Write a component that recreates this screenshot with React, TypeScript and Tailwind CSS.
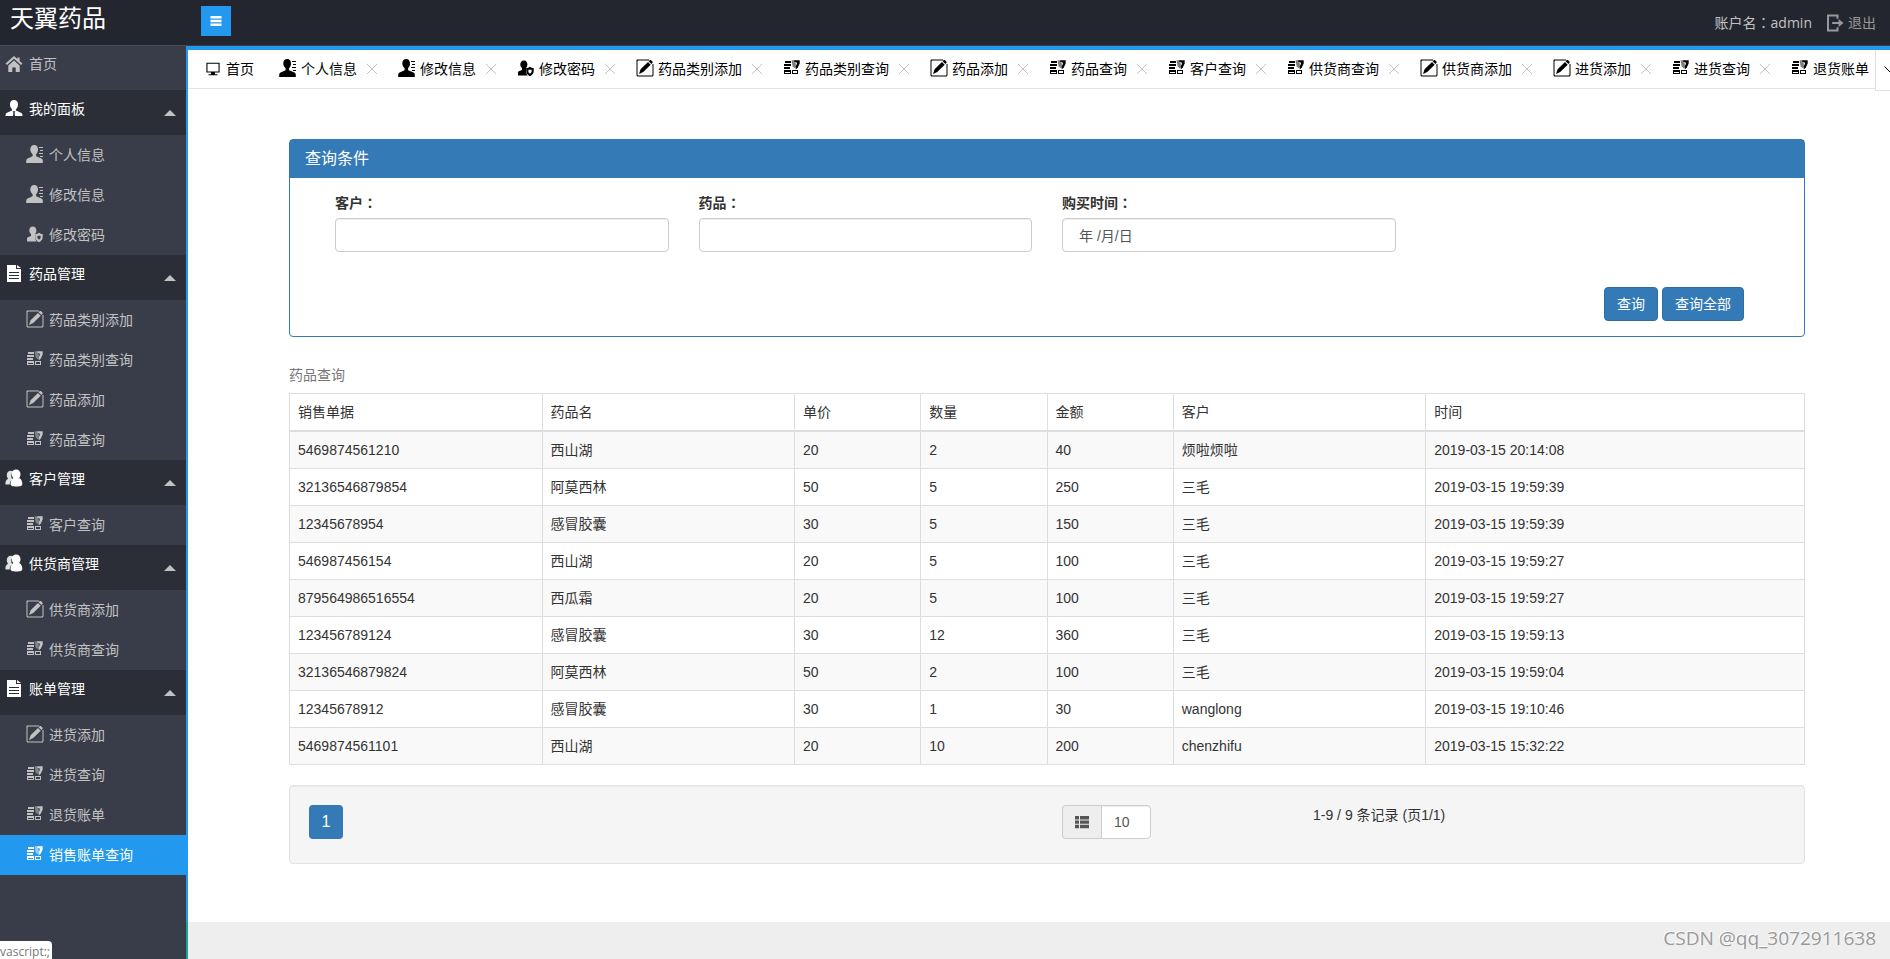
import type { ReactNode } from "react";

type IconName = "home" | "user" | "userList" | "userShield" | "doc" | "edit" | "query" | "users" | "monitor" | "logout";

const shapes: Record<IconName, ReactNode> = {
  home: (
    <>
      <path d="M9 1 0.5 8.6 1.9 10 9 3.8 16.1 10 17.5 8.6 14.6 6V2.6h-2.2V4z" />
      <path d="M9 5.4 3.3 10.4V17h4v-4.6h3.4V17h4v-6.6z" />
    </>
  ),
  user: (
    <path d="M9 1c2.6 0 4 1.8 4 4.4 0 2-.8 3.7-2 4.8v1.2l5 2.3c1 .5 1.5 1.4 1.5 3.3H10l-.4-3.2.8-1.6H7.6l.8 1.6L8 17H.5c0-1.9.5-2.8 1.5-3.3l5-2.3v-1.2C5.8 9.1 5 7.4 5 5.4 5 2.8 6.4 1 9 1z" />
  ),
  userList: (
    <>
      <path d="M8.2 0c2.6 0 3.8 1.8 3.8 4.500 0 2-.8 3.700-1.900 4.800v2l5.400 2.300c1 .5 1.300 1.400 1.300 2.900V18H.2v-1.500c0-1.500.4-2.400 1.400-2.900l5-2.300v-2C5.400 8.200 4.300 6.500 4.300 4.500 4.300 1.800 5.700 0 8.200 0z" />
      <path d="M13 2h4v1h-4zM14 5h3v1h-3zM13 8h4v1h-4zM14 11h3v1h-3z" />
    </>
  ),
  userShield: (
    <>
      <path d="M6.8 1.5c2.4 0 3.6 1.7 3.6 4 0 1.300-.4 2.300-1 3.100l-.3 3.600c.2 1.800.7 3.200 1.700 4.300H1v-2.500c0-1 .5-1.700 1.400-2l2.600-1.100V9C3.900 8.100 3.300 7 3.300 5.500c0-2.300 1.100-4 3.500-4z" />
      <path
        fillRule="evenodd"
        d="M13 7.800c1.100.8 2.200 1.200 3.700 1.200v3c0 2.400-1.300 4.200-3.700 5.200-2.400-1-3.700-2.800-3.700-5.200V9c1.500 0 2.600-.4 3.700-1.200zm-1.600 3v1.400c0 1 .6 1.900 1.600 2.400 1-.5 1.600-1.400 1.600-2.400v-1.400z"
      />
    </>
  ),
  doc: (
    <path fillRule="evenodd" d="M2 1h9v4h5v13H2zM12 1l4 3h-4zM4 8v1h10V8zm0 3v1h10v-1zm0 3v1h10v-1z" />
  ),
  edit: (
    <>
      <path
        fillRule="evenodd"
        d="M1.500.5H13v1H2.200c-.4 0-.7.3-.7.7v13.600c0 .4.3.7.7.7h13.600c.4 0 .7-.3.7-.7V5h1v11c0 .9-.6 1.500-1.500 1.500H2c-.9 0-1.500-.6-1.500-1.500V1.500c0-.6.4-1 1-1z"
      />
      <path d="M13.600 1.200c.5-.4 1.100-.4 1.500 0l1.300 1.300c.4.4.4 1 0 1.500l-1 1-2.800-2.800zM12 2.900l2.700 2.800-7.500 7.200L3 15l1.600-4.700z" />
    </>
  ),
  query: (
    <>
      <path d="M2 2h6v2H2zM1 5h7v2H1zM1 8h6v2H1z" />
      <path fillRule="evenodd" d="M1 11h7v4H1zM2 13v1h5v-1zM9 11h6v4H9zM10 12v2h4v-2z" />
      <path opacity="0.5" d="M8.500 1.200h3.300l1.200 4.300-.6 4.200L9.600 7.400z" />
      <path d="M11.300 1.200h5.400v3.300l-2 4.200-1.800 1.500-.3-2.600 1.400-2.800-.6-1.600-2.100-.4z" />
    </>
  ),
  users: (
    <>
      <path opacity="0.85" d="M5.800 1.800c1 0 1.800.3 2.300.8C6.500 4 6 6 6.400 8c.2 1 .6 1.900 1.200 2.600-1.700.8-2.800 2.200-2.900 4.800H.5c-.3-2.800.4-4.500 2.600-5.600C2.300 8.700 1.800 7.400 1.800 6c0-2.600 1.600-4.200 4-4.200z" />
      <path d="M11 .5c2.700 0 4.500 1.900 4.500 4.500 0 1.600-.5 2.900-1.300 3.900 2.200 1.200 3.200 3.300 3.100 6.100 0 1.600-1.200 2.500-5.800 2.500S5.500 16.600 5.500 15c0-2.800.9-4.900 2.900-6.100C7.300 7.900 6.700 6.600 6.700 5c0-2.600 1.700-4.500 4.300-4.500z" />
    </>
  ),
  monitor: <path fillRule="evenodd" d="M.5 1h17v12.500h-6v2.300h3.300v1.300H3.200v-1.300h3.300v-2.300h-6zM1.900 2.400v9.700h14.200V2.400z" />,
  logout: (
    <path d="M1 .5h11.500v4.300h-2V2.600H3v12.800h7.500v-2.200h2v4.300H1zM12.600 5l4.900 4-4.900 4v-3H6.200V8h6.400z" />
  ),
};

function Icon({ name, className = "mb-0.5 size-[18px]" }: { name: IconName; className?: string }) {
  return (
    <svg viewBox="0 0 18 18" fill="currentColor" aria-hidden="true" className={`shrink-0 ${className}`}>
      {shapes[name]}
    </svg>
  );
}

// the TC face centres the full-width colon in its box
function Colon() {
  return <span className="font-['Noto_Sans_CJK_TC',sans-serif] leading-none">：</span>;
}

type Item = { icon: IconName; label: string };

const menu: { icon: IconName; title: string; items: Item[] }[] = [
  {
    icon: "user",
    title: "我的面板",
    items: [
      { icon: "userList", label: "个人信息" },
      { icon: "userList", label: "修改信息" },
      { icon: "userShield", label: "修改密码" },
    ],
  },
  {
    icon: "doc",
    title: "药品管理",
    items: [
      { icon: "edit", label: "药品类别添加" },
      { icon: "query", label: "药品类别查询" },
      { icon: "edit", label: "药品添加" },
      { icon: "query", label: "药品查询" },
    ],
  },
  { icon: "users", title: "客户管理", items: [{ icon: "query", label: "客户查询" }] },
  {
    icon: "users",
    title: "供货商管理",
    items: [
      { icon: "edit", label: "供货商添加" },
      { icon: "query", label: "供货商查询" },
    ],
  },
  {
    icon: "doc",
    title: "账单管理",
    items: [
      { icon: "edit", label: "进货添加" },
      { icon: "query", label: "进货查询" },
      { icon: "query", label: "退货账单" },
      { icon: "query", label: "销售账单查询" },
    ],
  },
];

const tabs: Item[] = [
  { icon: "userList", label: "个人信息" },
  { icon: "userList", label: "修改信息" },
  { icon: "userShield", label: "修改密码" },
  { icon: "edit", label: "药品类别添加" },
  { icon: "query", label: "药品类别查询" },
  { icon: "edit", label: "药品添加" },
  { icon: "query", label: "药品查询" },
  { icon: "query", label: "客户查询" },
  { icon: "query", label: "供货商查询" },
  { icon: "edit", label: "供货商添加" },
  { icon: "edit", label: "进货添加" },
  { icon: "query", label: "进货查询" },
  { icon: "query", label: "退货账单" },
];

const fields = [
  { id: "customer", label: "客户", value: "" },
  { id: "drug", label: "药品", value: "" },
  { id: "date", label: "购买时间", value: "年 /月/日" },
];

const columns = [
  { title: "销售单据", width: "w-2/12" },
  { title: "药品名", width: "w-2/12" },
  { title: "单价", width: "w-1/12" },
  { title: "数量", width: "w-1/12" },
  { title: "金额", width: "w-1/12" },
  { title: "客户", width: "w-2/12" },
  { title: "时间", width: "w-3/12" },
];

const rows = [
  ["5469874561210", "西山湖", "20", "2", "40", "烦啦烦啦", "2019-03-15 20:14:08"],
  ["32136546879854", "阿莫西林", "50", "5", "250", "三毛", "2019-03-15 19:59:39"],
  ["12345678954", "感冒胶囊", "30", "5", "150", "三毛", "2019-03-15 19:59:39"],
  ["546987456154", "西山湖", "20", "5", "100", "三毛", "2019-03-15 19:59:27"],
  ["879564986516554", "西瓜霜", "20", "5", "100", "三毛", "2019-03-15 19:59:27"],
  ["123456789124", "感冒胶囊", "30", "12", "360", "三毛", "2019-03-15 19:59:13"],
  ["32136546879824", "阿莫西林", "50", "2", "100", "三毛", "2019-03-15 19:59:04"],
  ["12345678912", "感冒胶囊", "30", "1", "30", "wanglong", "2019-03-15 19:10:46"],
  ["5469874561101", "西山湖", "20", "10", "200", "chenzhifu", "2019-03-15 15:32:22"],
];

const buttonClass = "h-[34px] rounded-sm border border-[#2e6da4] bg-[#337ab7] px-3 text-sm text-white";

function Header() {
  return (
    <header className="flex h-[45px] items-start bg-[#23262e]">
      <h1 className="w-[201px] pl-2.5 text-2xl leading-9 text-white">天翼药品</h1>
      <button type="button" aria-label="菜单" className="mt-1.5 flex size-[30px] items-center justify-center bg-[#2299ee] text-white">
        <svg viewBox="0 0 12 10" fill="currentColor" className="h-2.5 w-3">
          <path d="M.5 0h11v2.400H.5zM.5 3.800h11v2.400H.5zM.5 7.600h11V10H.5z" />
        </svg>
      </button>
      <div className="ml-auto flex h-[45px] items-center gap-3.5 pr-3.5 text-sm">
        <span className="text-[#c2c2c2]">
          账户名
          <Colon />
          admin
        </span>
        <a href="#" className="flex items-center gap-1 text-[#999]">
          <Icon name="logout" className="size-[18px]" />
          退出
        </a>
      </div>
    </header>
  );
}

function Sidebar() {
  return (
    <nav className="w-[186px] shrink-0 bg-[#393d49] text-sm text-[#c2c2c2]">
      <a href="#" className="flex h-[45px] items-center gap-1.5 border-t border-[#4a4e5a] pb-2 pl-[5px]">
        <Icon name="home" className="size-[18px]" />
        首页
      </a>
      {menu.map((group) => (
        <div key={group.title}>
          <button type="button" className="flex h-[45px] w-full items-center bg-[#2b2e37] pl-[5px] pr-2.5 text-white">
            <span className="flex items-center gap-1.5 pb-2">
              <Icon name={group.icon} />
              {group.title}
            </span>
            <span className="ml-auto border-x-6 border-b-6 border-x-transparent border-b-[#c2c2c2]" />
          </button>
          <ul>
            {group.items.map((item) => (
              <li key={item.label}>
                <a
                  href="#"
                  className={`flex h-10 items-center gap-[5px] pl-[26px] ${
                    item.label === "销售账单查询" ? "bg-[#2299ee] text-white" : ""
                  }`}
                >
                  <Icon name={item.icon} />
                  {item.label}
                </a>
              </li>
            ))}
          </ul>
        </div>
      ))}
    </nav>
  );
}

function TabBar() {
  return (
    <div className="flex items-start border-t-4 border-[#2299ee] bg-white text-sm text-black">
      <ul className="flex h-[39px] min-w-0 flex-1 overflow-hidden border-b border-[#e2e2e2]">
        <li className="flex shrink-0 items-center pl-[18px] pr-2.5">
          <a href="#" className="flex items-center gap-1.5">
            <Icon name="monitor" className="size-3.5" />
            首页
          </a>
        </li>
        {tabs.map((tab) => (
          <li key={tab.label} className="flex shrink-0 items-center gap-2.5 pl-[15px] pr-1.5">
            <a href="#" className="flex items-center gap-1">
              <Icon name={tab.icon} />
              {tab.label}
            </a>
            <button type="button" aria-label={`关闭${tab.label}`} className="text-[#c2c2c2]">
              <svg viewBox="0 0 10 10" stroke="currentColor" className="size-2.5">
                <path d="M0 0 10 10M10 0 0 10" />
              </svg>
            </button>
          </li>
        ))}
      </ul>
      <button type="button" aria-label="更多" className="flex h-[41px] w-[15px] items-center overflow-hidden border-b border-l border-[#e2e2e2] pl-2">
        <svg viewBox="0 0 14 8" fill="none" stroke="currentColor" className="h-2 w-3.5 shrink-0">
          <path d="M.5.5 7 7 13.500.5" />
        </svg>
      </button>
    </div>
  );
}

function SearchPanel() {
  return (
    <section className="rounded-sm border border-[#337ab7] bg-white">
      <h2 className="bg-[#337ab7] px-[15px] py-[9px] text-base leading-5 text-white">查询条件</h2>
      <form className="px-[30px] py-[15px]">
        <div className="grid grid-cols-4">
          {fields.map((field) => (
            <div key={field.id} className="px-[15px]">
              <label htmlFor={field.id} className="mb-[5px] block font-bold leading-5">
                {field.label}
                <Colon />
              </label>
              <input
                id={field.id}
                type="text"
                defaultValue={field.value}
                className="h-[34px] w-full rounded-sm border border-[#ccc] bg-white px-4 text-sm text-[#555] shadow-[inset_0_1px_1px_rgba(0,0,0,0.075)]"
              />
            </div>
          ))}
        </div>
        <div className="mt-[35px] flex justify-end gap-1 pr-[30px]">
          <button type="button" className={buttonClass}>查询</button>
          <button type="button" className={buttonClass}>查询全部</button>
        </div>
      </form>
    </section>
  );
}

function SalesTable() {
  return (
    <table className="mt-5 w-full table-fixed border-collapse border border-[#ddd] text-left">
      <caption className="py-2 text-left leading-5 text-[#777]">药品查询</caption>
      <thead>
        <tr>
          {columns.map((col) => (
            <th key={col.title} className={`${col.width} border border-b-2 border-[#ddd] p-2 font-normal leading-5`}>
              {col.title}
            </th>
          ))}
        </tr>
      </thead>
      <tbody>
        {rows.map((row) => (
          <tr key={row[0]} className="odd:bg-[#f9f9f9]">
            {row.map((cell, i) => (
              <td key={i} className="border border-[#ddd] p-2 leading-5">{cell}</td>
            ))}
          </tr>
        ))}
      </tbody>
    </table>
  );
}

function Pager() {
  return (
    <div className="mt-5 rounded-sm border border-[#e3e3e3] bg-[#f5f5f5] px-1 pb-6 pt-[19px] shadow-[inset_0_1px_1px_rgba(0,0,0,0.05)]">
      <div className="grid grid-cols-12">
        <div className="col-span-6 px-[15px]">
          <button type="button" className="size-[34px] rounded-sm bg-[#337ab7] text-base text-white">1</button>
        </div>
        <div className="col-span-2 flex px-[15px]">
          <label htmlFor="size" className="flex h-[34px] w-[39px] items-center justify-center rounded-l-sm border border-r-0 border-[#ccc] bg-[#eee] text-[#555]">
            <svg viewBox="0 0 14 14" fill="currentColor" role="img" aria-label="每页条数" className="size-3.5">
              <path d="M0 1h4v3.400H0zM5 1h9v3.400H5zM0 5.400h4v3.400H0zM5 5.400h9v3.400H5zM0 9.800h4v3.400H0zM5 9.800h9v3.400H5z" />
            </svg>
          </label>
          <select
            id="size"
            className="h-[34px] w-[50px] appearance-none rounded-r-sm border border-[#ccc] bg-white pl-3 text-sm text-[#555] shadow-[inset_0_1px_1px_rgba(0,0,0,0.075)]"
          >
            <option>10</option>
          </select>
        </div>
        <p className="col-span-4 px-[15px] leading-5">1-9 / 9 条记录 (页1/1)</p>
      </div>
    </div>
  );
}

export default function App() {
  return (
    <div className="flex min-h-screen flex-col font-['Open_Sans','Noto_Sans_CJK_SC',sans-serif]">
      <Header />
      <div className="flex flex-1">
        <Sidebar />
        <div className="flex min-w-0 flex-1 flex-col border-t border-[#393d49]">
          <div className="flex flex-1 flex-col border-l-2 border-[#2299ee]">
            <TabBar />
            <main className="flex-1 bg-white pb-10 pl-[101px] pr-[85px] pt-12 font-['Liberation_Sans','Noto_Sans_CJK_SC',sans-serif] text-sm text-[#333]">
              <SearchPanel />
              <SalesTable />
              <Pager />
            </main>
          </div>
          <footer className="h-[37px] border-l-2 border-[#1aa094] bg-[#eee] pr-3.5 text-right text-[19px] leading-8 text-[#999] [text-shadow:-1px_-1px_0_#fff]">
            CSDN @qq_3072911638
          </footer>
        </div>
      </div>
      <div className="fixed bottom-0 left-0 h-[18px] w-[52px] overflow-hidden rounded-tr-sm bg-white text-xs leading-[22px] text-[#777]">
        vascript:;
      </div>
    </div>
  );
}
